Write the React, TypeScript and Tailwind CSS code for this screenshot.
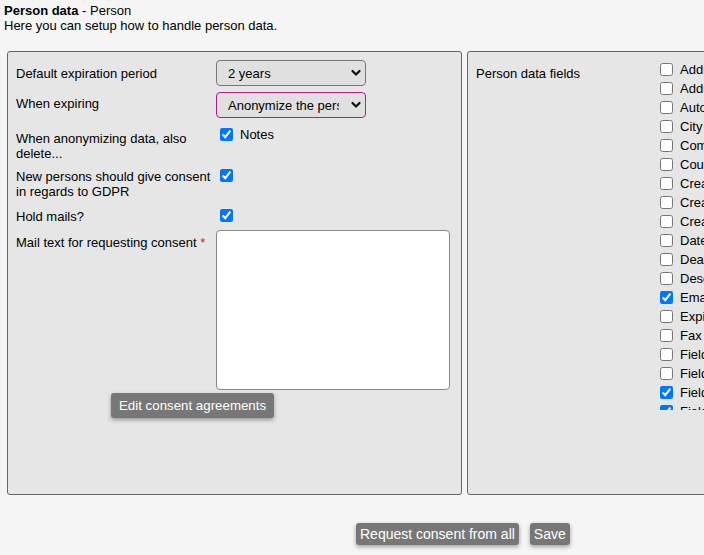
import React from "react"

const fields = [
  { name: "Address 1", checked: false },
  { name: "Address 2", checked: false },
  { name: "Autocomplete", checked: false },
  { name: "City", checked: false },
  { name: "Company", checked: false },
  { name: "Country", checked: false },
  { name: "Created", checked: false },
  { name: "Created by", checked: false },
  { name: "Created date", checked: false },
  { name: "Date of birth", checked: false },
  { name: "Deactivated", checked: false },
  { name: "Description", checked: false },
  { name: "Email", checked: true },
  { name: "Expiration", checked: false },
  { name: "Fax", checked: false },
  { name: "Field 1", checked: false },
  { name: "Field 2", checked: false },
  { name: "Field 3", checked: true },
  { name: "Field 4", checked: true },
  { name: "Field 5", checked: false },
]

function Chevron() {
  return (
    <svg
      className="pointer-events-none absolute right-[5px] top-1/2 h-[9px] w-[10px] -translate-y-1/2"
      viewBox="0 0 10 9"
      fill="none"
      stroke="#111"
      strokeWidth="2.2"
      strokeLinecap="round"
      strokeLinejoin="round"
    >
      <path d="M1.5 2.5 5 6 8.5 2.5" />
    </svg>
  )
}

function Select({ value, highlight }: { value: string; highlight?: boolean }) {
  return (
    <div className="relative w-[150px]">
      <select
        defaultValue={value}
        className={`h-[26px] w-full appearance-none rounded-[4px] border bg-[#e0e0e0] pl-[11px] pr-[26px] text-[13px] text-black outline-none ${
          highlight ? "border-[#c2187b]" : "border-[#777]"
        }`}
      >
        <option>{value}</option>
      </select>
      <Chevron />
    </div>
  )
}

export default function App() {
  return (
    <div className="h-[555px] w-[704px] overflow-hidden bg-[#f5f5f5] text-[13px] leading-[15px] text-black [font-family:'Liberation_Sans',Arial,sans-serif]">
      {/* Header */}
      <div className="px-[4px] pt-[3px]">
        <div>
          <span className="font-bold">Person data</span> - Person
        </div>
        <div>Here you can setup how to handle person data.</div>
      </div>

      {/* Panels */}
      <div className="mt-[18px] flex gap-[5px] pl-[7px]">
        {/* Left panel */}
        <div className="h-[444px] w-[455px] shrink-0 rounded-[3px] border border-[#666] bg-[#e6e6e6] pl-[8px] pt-[8px]">
          <div className="grid grid-cols-[200px_234px] gap-y-[6px]">
            <div className="pt-[6px]">Default expiration period</div>
            <Select value="2 years" />

            <div className="pt-[4px]">When expiring</div>
            <Select value="Anonymize the person" highlight />

            <div className="pt-[7px]">When anonymizing data, also delete...</div>
            <label className="flex items-start gap-[7px] pt-[4px]">
              <input type="checkbox" defaultChecked className="m-0 ml-[4px] h-[13px] w-[13px]" />
              <span className="-mt-[1px]">Notes</span>
            </label>

            <div className="pt-[2px]">New persons should give consent in regards to GDPR</div>
            <div className="pt-[2px]">
              <input type="checkbox" defaultChecked className="m-0 ml-[4px] h-[13px] w-[13px]" />
            </div>

            <div className="pt-[4px]">Hold mails?</div>
            <div className="pt-[4px]">
              <input type="checkbox" defaultChecked className="m-0 ml-[4px] h-[13px] w-[13px]" />
            </div>

            <div className="pt-[4px]">
              Mail text for requesting consent <span className="text-[#e02020]">*</span>
            </div>
            <textarea className="-mt-[1px] h-[160px] w-[234px] resize-none rounded-[4px] border border-[#888] bg-white outline-none" />
          </div>
          <button className="ml-[95px] mt-[3px] rounded-[3px] bg-[#777] px-[8px] py-[4px] text-[13.3px] leading-[17px] text-white shadow-[0_2px_4px_rgba(0,0,0,0.35)]">
            Edit consent agreements
          </button>
        </div>

        {/* Right panel */}
        <div className="flex h-[444px] w-[300px] shrink-0 rounded-[3px] border border-[#666] bg-[#e6e6e6] pl-[8px] pt-[8px]">
          <div className="w-[180px] shrink-0 pt-[6px]">Person data fields</div>
          <div className="h-[350px] overflow-hidden">
            {fields.map((f) => (
              <label key={f.name} className="flex h-[19px] items-center whitespace-nowrap">
                <input
                  type="checkbox"
                  defaultChecked={f.checked}
                  className="m-0 ml-[4px] mr-[7px] h-[13px] w-[13px]"
                />
                {f.name}
              </label>
            ))}
          </div>
        </div>
      </div>

      {/* Footer buttons */}
      <div className="mt-[28px] flex gap-[11px] pl-[356px]">
        <button className="rounded-[3px] bg-[#777] px-[4px] py-[2px] text-[14px] leading-[18px] text-white shadow-[0_2px_4px_rgba(0,0,0,0.35)]">
          Request consent from all
        </button>
        <button className="rounded-[3px] bg-[#777] px-[4px] py-[2px] text-[14px] leading-[18px] text-white shadow-[0_2px_4px_rgba(0,0,0,0.35)]">
          Save
        </button>
      </div>
    </div>
  )
}
